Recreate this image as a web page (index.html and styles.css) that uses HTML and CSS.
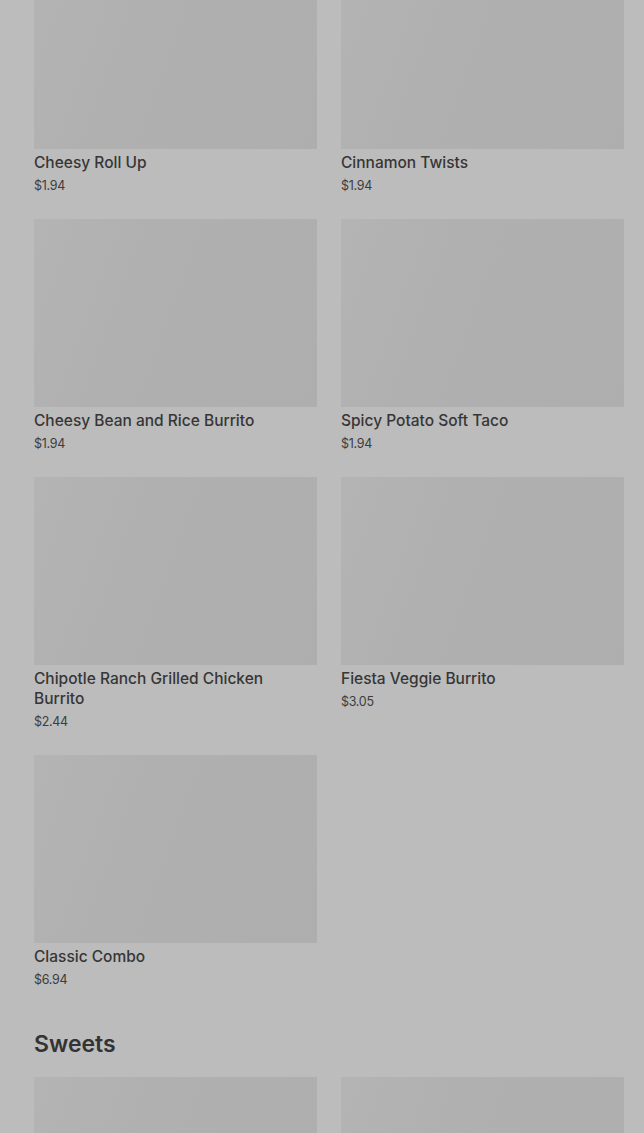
FILE: index.html
```html
<!DOCTYPE html>
<html lang="en">
<head>
  <meta charset="UTF-8">
  <meta name="viewport" content="width=device-width, initial-scale=1.0">
  <title>Menu</title>
  <link rel="stylesheet" href="styles.css">
</head>
<body>
  <main class="menu">
    <!-- เมนูหลัก -->
    <section class="category">
      <div class="grid">
        <div class="item">
          <div class="thumb"></div>
          <h3 class="name">Cheesy Roll Up</h3>
          <p class="price">$1.94</p>
        </div>
        <div class="item">
          <div class="thumb"></div>
          <h3 class="name">Cinnamon Twists</h3>
          <p class="price">$1.94</p>
        </div>
        <div class="item">
          <div class="thumb"></div>
          <h3 class="name">Cheesy Bean and Rice Burrito</h3>
          <p class="price">$1.94</p>
        </div>
        <div class="item">
          <div class="thumb"></div>
          <h3 class="name">Spicy Potato Soft Taco</h3>
          <p class="price">$1.94</p>
        </div>
        <div class="item">
          <div class="thumb"></div>
          <h3 class="name">Chipotle Ranch Grilled Chicken Burrito</h3>
          <p class="price">$2.44</p>
        </div>
        <div class="item">
          <div class="thumb"></div>
          <h3 class="name">Fiesta Veggie Burrito</h3>
          <p class="price">$3.05</p>
        </div>
        <div class="item">
          <div class="thumb"></div>
          <h3 class="name">Classic Combo</h3>
          <p class="price">$6.94</p>
        </div>
      </div>
    </section>

    <!-- ของหวาน -->
    <section class="category">
      <h2 class="category-title">Sweets</h2>
      <div class="grid">
        <div class="item">
          <div class="thumb"></div>
        </div>
        <div class="item">
          <div class="thumb"></div>
        </div>
      </div>
    </section>
  </main>
</body>
</html>
```

FILE: styles.css
```css
body {
  margin: 0;
  padding: 0;
  background-color: #bcbcbc;
  font-family: Inter, "Noto Sans", sans-serif;
  color: #363636;
  overflow: hidden;
}
.menu {
  margin-top: -39px; /* หน้าเลื่อนลงมาแล้ว */
  padding: 0 20px 0 34px;
}
.grid {
  display: grid;
  grid-template-columns: 1fr 1fr;
  column-gap: 24px;
  row-gap: 16px;
}
.item {
  padding-bottom: 9px;
}
.thumb {
  height: 188px;
  background: linear-gradient(110deg, #b4b4b4 0%, #b0b0b0 35%, #aeaeae 100%);
}
.name {
  margin: 4px 0 0;
  font-size: 15.5px;
  font-weight: 500;
  line-height: 20px;
  padding-right: 20px;
}
.price {
  margin: 5px 0 0;
  font-size: 12.5px;
  line-height: 16px;
  color: #3c3c3c;
  letter-spacing: -0.3px;
}
.category-title {
  margin: 32px 0 18px;
  font-size: 23px;
  line-height: 30px;
  font-weight: 600;
  color: #333;
}
```
